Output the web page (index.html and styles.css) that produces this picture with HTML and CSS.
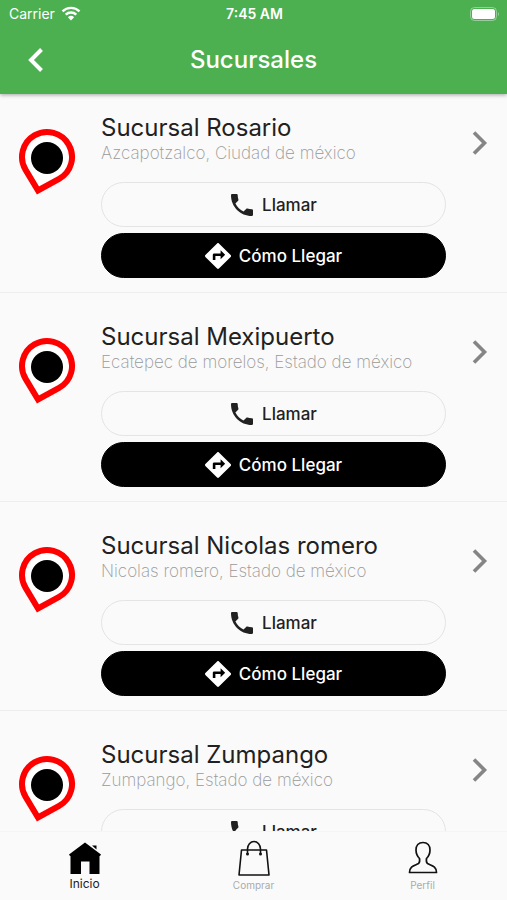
FILE: index.html
```html
<!DOCTYPE html>
<html lang="es">
<head>
  <meta charset="UTF-8">
  <title>Sucursales</title>
  <meta name="viewport" content="width=device-width, initial-scale=1.0">
  <link rel="stylesheet" href="styles.css">
</head>
<body>
  <!-- Shared icons -->
  <svg class="sprite" aria-hidden="true">
    <symbol id="pin" viewBox="0 0 60 70">
      <path d="M21 63.5 L8.6 42.9 A25 25 0 1 1 42.1 51.9 Z" fill="#fff" stroke="#f00" stroke-width="6" stroke-miterlimit="8"/>
      <circle cx="30" cy="31" r="16" fill="#000"/>
    </symbol>
    <symbol id="phone" viewBox="3 3 18 18">
      <path d="M6.62 10.79c1.44 2.83 3.76 5.14 6.59 6.59l2.2-2.2c.27-.27.67-.36 1.02-.24 1.12.37 2.33.57 3.57.57.55 0 1 .45 1 1V20c0 .55-.45 1-1 1-9.39 0-17-7.61-17-17 0-.55.45-1 1-1h3.5c.55 0 1 .45 1 1 0 1.25.2 2.45.57 3.57.11.35.03.74-.25 1.02l-2.2 2.2z" fill="currentColor"/>
    </symbol>
    <symbol id="directions" viewBox="2 2 20 20">
      <path d="M21.71 11.29l-9-9a.996.996 0 0 0-1.41 0l-9 9a.996.996 0 0 0 0 1.41l9 9c.39.39 1.02.39 1.41 0l9-9a.996.996 0 0 0 0-1.41zM14 14.5V12h-4v3H8v-4c0-.55.45-1 1-1h5V7.5l3.5 3.5-3.5 3.5z" fill="currentColor"/>
    </symbol>
    <symbol id="chevron" viewBox="0 0 16 26">
      <path d="M2 2.5 L12.5 13 L2 23.5" fill="none" stroke="currentColor" stroke-width="3.6"/>
    </symbol>
  </svg>

  <header class="header">
    <div class="status">
      <span class="carrier">Carrier
        <svg width="20" height="15" viewBox="0 0 20 15">
          <g fill="none" stroke="#fff" stroke-width="2.4">
            <path d="M1.5 5.3 A12.2 12.2 0 0 1 18.5 5.3"/>
            <path d="M4.7 8.7 A7.6 7.6 0 0 1 15.3 8.7"/>
          </g>
          <path d="M10 14.5 L6.9 11.3 A4.5 4.5 0 0 1 13.1 11.3 Z" fill="#fff"/>
        </svg>
      </span>
      <span class="time">7:45 AM</span>
      <svg class="battery" width="30" height="14" viewBox="0 0 30 14">
        <rect x="0.5" y="0.5" width="26" height="13" rx="4" fill="none" stroke="#fff" stroke-opacity=".4"/>
        <rect x="2" y="2" width="23" height="10" rx="2.5" fill="#fff"/>
        <path d="M28 5 a2.5 2.5 0 0 1 0 4 z" fill="#fff" fill-opacity=".4"/>
      </svg>
    </div>
    <div class="toolbar">
      <button class="back" type="button" aria-label="Volver">
        <svg width="18" height="26" viewBox="0 0 18 26"><path d="M14.5 2.5 L4 13 L14.5 23.5" fill="none" stroke="#fff" stroke-width="4"/></svg>
      </button>
      <h1>Sucursales</h1>
    </div>
  </header>

  <main class="content">
    <ul class="branches">
      <li class="branch">
        <svg class="pin"><use href="#pin"/></svg>
        <div class="info">
          <h2>Sucursal Rosario</h2>
          <p>Azcapotzalco, Ciudad de méxico</p>
          <button class="btn" type="button"><svg class="phone"><use href="#phone"/></svg>Llamar</button>
          <button class="btn dark" type="button"><svg class="directions"><use href="#directions"/></svg>Cómo Llegar</button>
        </div>
        <a class="more" href="#rosario" aria-label="Ver Sucursal Rosario"><svg><use href="#chevron"/></svg></a>
      </li>
      <li class="branch">
        <svg class="pin"><use href="#pin"/></svg>
        <div class="info">
          <h2>Sucursal Mexipuerto</h2>
          <p>Ecatepec de morelos, Estado de méxico</p>
          <button class="btn" type="button"><svg class="phone"><use href="#phone"/></svg>Llamar</button>
          <button class="btn dark" type="button"><svg class="directions"><use href="#directions"/></svg>Cómo Llegar</button>
        </div>
        <a class="more" href="#mexipuerto" aria-label="Ver Sucursal Mexipuerto"><svg><use href="#chevron"/></svg></a>
      </li>
      <li class="branch">
        <svg class="pin"><use href="#pin"/></svg>
        <div class="info">
          <h2>Sucursal Nicolas romero</h2>
          <p>Nicolas romero, Estado de méxico</p>
          <button class="btn" type="button"><svg class="phone"><use href="#phone"/></svg>Llamar</button>
          <button class="btn dark" type="button"><svg class="directions"><use href="#directions"/></svg>Cómo Llegar</button>
        </div>
        <a class="more" href="#nicolas-romero" aria-label="Ver Sucursal Nicolas romero"><svg><use href="#chevron"/></svg></a>
      </li>
      <li class="branch">
        <svg class="pin"><use href="#pin"/></svg>
        <div class="info">
          <h2>Sucursal Zumpango</h2>
          <p>Zumpango, Estado de méxico</p>
          <button class="btn" type="button"><svg class="phone"><use href="#phone"/></svg>Llamar</button>
          <button class="btn dark" type="button"><svg class="directions"><use href="#directions"/></svg>Cómo Llegar</button>
        </div>
        <a class="more" href="#zumpango" aria-label="Ver Sucursal Zumpango"><svg><use href="#chevron"/></svg></a>
      </li>
    </ul>
  </main>

  <nav class="tabs">
    <a class="tab active" href="#inicio">
      <svg width="34" height="34" viewBox="0 0 34 34">
        <path d="M17 1.5 L33 13.5 L32 15 H31.5 V33 H21.5 V20.5 H13 V33 H2.5 V15 H2 L1 13.5 Z M24 4.500 H28.5 V8.500 Z" fill="#000"/>
      </svg>
      Inicio
    </a>
    <a class="tab" href="#comprar">
      <svg width="34" height="36" viewBox="0 0 34 36">
        <g fill="none" stroke="#111" stroke-width="1.6" stroke-linejoin="round">
          <path d="M4.5 10 H29.5 L32 35 H2 Z"/>
          <path d="M10.5 14 V9 A6.5 7.5 0 0 1 23.5 9 V14"/>
        </g>
        <circle cx="10.5" cy="14" r="1.5" fill="#111"/>
        <circle cx="23.5" cy="14" r="1.5" fill="#111"/>
      </svg>
      Comprar
    </a>
    <a class="tab" href="#perfil">
      <svg width="30" height="36" viewBox="0 0 30 36">
        <path d="M15 2.500 C10.5 2.500 8 5.500 8 10 C8 13.500 9 16 11.500 18.500 C12 21.500 12 22.500 10.500 23.500 C7 25.500 1.500 26 1.500 32.500 H28.500 C28.500 26 23 25.500 19.500 23.500 C18 22.500 18 21.500 18.500 18.500 C21 16 22 13.500 22 10 C22 5.500 19.500 2.500 15 2.500 Z" fill="none" stroke="#111" stroke-width="1.7" stroke-linejoin="round"/>
      </svg>
      Perfil
    </a>
  </nav>
</body>
</html>
```

FILE: styles.css
```css
:root {
  --green: #4caf50;
  --background: #fafafa;
  --text: #212121;
  --muted: #999;
  --line: #e4e4e4;
}

* {
  box-sizing: border-box;
}

body {
  margin: 0;
  height: 100vh;
  display: flex;
  flex-direction: column;
  overflow: hidden;
  background: var(--background);
  color: var(--text);
  font-family: Inter, Roboto, sans-serif;
}

svg {
  display: block;
  flex: none;
}

a {
  color: inherit;
  text-decoration: none;
}

.sprite {
  display: none;
}

/* Header */
.header {
  flex: none;
  background: var(--green);
  color: #fff;
  box-shadow: 0 1px 4px rgba(0, 0, 0, 0.35);
  z-index: 1;
}

.status {
  display: grid;
  grid-template-columns: 1fr auto 1fr;
  align-items: center;
  height: 27px;
  padding: 0 7px 0 9px;
  font-size: 14px;
}

.carrier {
  display: flex;
  align-items: center;
  gap: 6px;
}

.time {
  font-weight: 600;
}

.battery {
  justify-self: end;
}

.toolbar {
  display: grid;
  grid-template-columns: 72px 1fr 72px;
  align-items: center;
  height: 67px;
  padding-bottom: 2px;
}

.back {
  display: flex;
  justify-content: center;
  padding: 8px;
  border: none;
  background: none;
  cursor: pointer;
}

h1 {
  margin: 0;
  text-align: center;
  font-size: 24px;
  line-height: 32px;
  font-weight: 500;
}

/* Branch list */
.content {
  flex: 1;
  min-height: 0;
  overflow: hidden;
}

.branches {
  display: flex;
  flex-direction: column;
  gap: 10px;
  margin: 0;
  padding: 0;
  list-style: none;
}

.branch {
  display: flex;
  align-items: flex-start;
  padding: 20px 17px 14px;
  border-bottom: 1px solid #eee;
}

.pin {
  width: 60px;
  height: 70px;
  margin-top: 13px;
}

.info {
  flex: 1;
  margin: 0 24px;
}

h2 {
  margin: 0;
  font-size: 24px;
  line-height: 28px;
  font-weight: 400;
}

p {
  margin: 0 0 18px;
  font-size: 17px;
  line-height: 22px;
  font-weight: 200;
  color: var(--muted);
}

.btn {
  display: flex;
  align-items: center;
  justify-content: center;
  gap: 8px;
  width: 100%;
  height: 45px;
  border: 1px solid var(--line);
  border-radius: 23px;
  background: none;
  color: var(--text);
  font: 500 17px Inter, Roboto, sans-serif;
  cursor: pointer;
}

.btn + .btn {
  margin-top: 6px;
}

.btn.dark {
  border-color: #000;
  background: #000;
  color: #fff;
}

.phone {
  width: 24px;
  height: 22px;
}

.directions {
  width: 26px;
  height: 26px;
}

.more {
  margin-top: 16px;
  color: #858585;
}

.more svg {
  width: 20px;
  height: 26px;
}

/* Bottom navigation */
.tabs {
  flex: none;
  display: grid;
  grid-template-columns: repeat(3, 1fr);
  height: 69px;
  background: var(--background);
  border-top: 1px solid #f5f5f5;
}

.tab {
  display: flex;
  flex-direction: column;
  align-items: center;
  justify-content: flex-end;
  gap: 2px;
  padding-bottom: 8px;
  font-size: 10px;
  line-height: 14px;
  color: #aaa;
}

.tab.active {
  gap: 1px;
  font-size: 12px;
  line-height: 16px;
  color: var(--text);
}
```
